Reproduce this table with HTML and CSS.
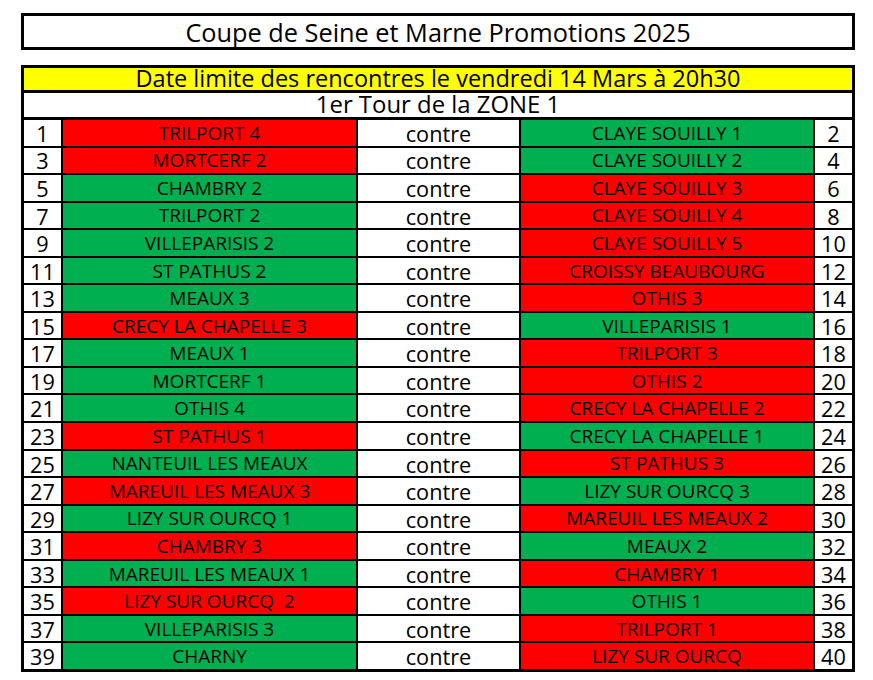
FILE: index.html
```html
<!DOCTYPE html>
<html lang="fr">
<head>
<meta charset="utf-8">
<title>Coupe de Seine et Marne Promotions 2025</title>
<link rel="stylesheet" href="styles.css">
</head>
<body>
<div class="title">Coupe de Seine et Marne Promotions 2025</div>
<div class="sheet">
  <div class="banner">Date limite des rencontres le vendredi 14 Mars à 20h30</div>
  <div class="round">1er Tour de la ZONE 1</div>
  <div class="grid">
    <div class="n">1</div><div class="team r">TRILPORT 4</div><div class="vs">contre</div><div class="team g">CLAYE SOUILLY 1</div><div class="n">2</div>
    <div class="n">3</div><div class="team r">MORTCERF 2</div><div class="vs">contre</div><div class="team g">CLAYE SOUILLY 2</div><div class="n">4</div>
    <div class="n">5</div><div class="team g">CHAMBRY 2</div><div class="vs">contre</div><div class="team r">CLAYE SOUILLY 3</div><div class="n">6</div>
    <div class="n">7</div><div class="team g">TRILPORT 2</div><div class="vs">contre</div><div class="team r">CLAYE SOUILLY 4</div><div class="n">8</div>
    <div class="n">9</div><div class="team g">VILLEPARISIS 2</div><div class="vs">contre</div><div class="team r">CLAYE SOUILLY 5</div><div class="n">10</div>
    <div class="n">11</div><div class="team g">ST PATHUS 2</div><div class="vs">contre</div><div class="team r">CROISSY BEAUBOURG</div><div class="n">12</div>
    <div class="n">13</div><div class="team g">MEAUX 3</div><div class="vs">contre</div><div class="team r">OTHIS 3</div><div class="n">14</div>
    <div class="n">15</div><div class="team r">CRECY LA CHAPELLE 3</div><div class="vs">contre</div><div class="team g">VILLEPARISIS 1</div><div class="n">16</div>
    <div class="n">17</div><div class="team g">MEAUX 1</div><div class="vs">contre</div><div class="team r">TRILPORT 3</div><div class="n">18</div>
    <div class="n">19</div><div class="team g">MORTCERF 1</div><div class="vs">contre</div><div class="team r">OTHIS 2</div><div class="n">20</div>
    <div class="n">21</div><div class="team g">OTHIS 4</div><div class="vs">contre</div><div class="team r">CRECY LA CHAPELLE 2</div><div class="n">22</div>
    <div class="n">23</div><div class="team r">ST PATHUS 1</div><div class="vs">contre</div><div class="team g">CRECY LA CHAPELLE 1</div><div class="n">24</div>
    <div class="n">25</div><div class="team g">NANTEUIL LES MEAUX</div><div class="vs">contre</div><div class="team r">ST PATHUS 3</div><div class="n">26</div>
    <div class="n">27</div><div class="team r">MAREUIL LES MEAUX 3</div><div class="vs">contre</div><div class="team g">LIZY SUR OURCQ 3</div><div class="n">28</div>
    <div class="n">29</div><div class="team g">LIZY SUR OURCQ 1</div><div class="vs">contre</div><div class="team r">MAREUIL LES MEAUX 2</div><div class="n">30</div>
    <div class="n">31</div><div class="team r">CHAMBRY 3</div><div class="vs">contre</div><div class="team g">MEAUX 2</div><div class="n">32</div>
    <div class="n">33</div><div class="team g">MAREUIL LES MEAUX 1</div><div class="vs">contre</div><div class="team r">CHAMBRY 1</div><div class="n">34</div>
    <div class="n">35</div><div class="team r">LIZY SUR OURCQ  2</div><div class="vs">contre</div><div class="team g">OTHIS 1</div><div class="n">36</div>
    <div class="n">37</div><div class="team g">VILLEPARISIS 3</div><div class="vs">contre</div><div class="team r">TRILPORT 1</div><div class="n">38</div>
    <div class="n">39</div><div class="team g">CHARNY</div><div class="vs">contre</div><div class="team r">LIZY SUR OURCQ</div><div class="n">40</div>
  </div>
</div>
</body>
</html>
```
FILE: styles.css
```css
html, body {
  margin: 0;
  padding: 0;
  background: #fff;
}
body {
  font-family: "Open Sans", "Lato", sans-serif;
  font-variant-ligatures: none;
  color: #000;
  padding: 13px 0 0 21px;
}
.title {
  box-sizing: border-box;
  width: 834px;
  height: 37px;
  border: 3px solid #000;
  text-align: center;
  font-size: 25.3px;
  line-height: 32px;
}
.sheet {
  box-sizing: border-box;
  width: 834px;
  margin-top: 15px;
  border: 3px solid #000;
  background: #000;
  display: flex;
  flex-direction: column;
  gap: 3px;
}
.banner {
  height: 22px;
  background: #ffff00;
  text-align: center;
  font-size: 23.5px;
  line-height: 20px;
}
.round {
  height: 24px;
  background: #fff;
  text-align: center;
  font-size: 23.9px;
  line-height: 21px;
}
.grid {
  display: grid;
  grid-template-columns: 37px 293px 161px 292px 37px;
  grid-auto-rows: 1fr;
  height: 549px;
  gap: 2px;
}
.grid > div {
  display: flex;
  justify-content: center;
  align-items: center;
  white-space: pre;
  line-height: 1;
}
.n, .vs {
  background: #fff;
  font-size: 21.7px;
  padding-top: 2px;
}
.team {
  font-size: 19px;
  padding-top: 1px;
}
.r { background: #ff0000; }
.g { background: #00b050; }
```
